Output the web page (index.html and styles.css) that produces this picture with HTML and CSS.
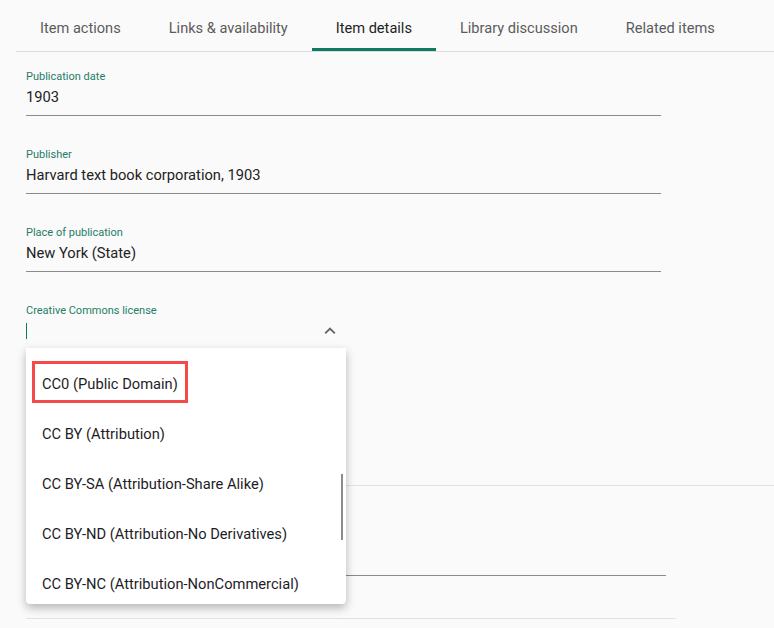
FILE: index.html
```html
<!DOCTYPE html>
<html lang="en">
<head>
  <meta charset="UTF-8" />
  <title>Item details</title>
  <link rel="stylesheet" href="styles.css">
</head>
<body>
  <!-- Tabs -->
  <nav class="tabs">
    <a class="tab">Item actions</a>
    <a class="tab">Links &amp; availability</a>
    <a class="tab active">Item details</a>
    <a class="tab">Library discussion</a>
    <a class="tab">Related items</a>
  </nav>

  <div class="details">
    <div class="field">
      <label>Publication date</label>
      <div class="value">1903</div>
    </div>

    <div class="field">
      <label>Publisher</label>
      <div class="value">Harvard text book corporation, 1903</div>
    </div>

    <div class="field">
      <label>Place of publication</label>
      <div class="value">New York (State)</div>
    </div>

    <!-- License select, open -->
    <div class="field select open">
      <label>Creative Commons license</label>
      <div class="value">
        <span class="caret"></span>
        <svg class="chevron" width="22" height="22" viewBox="0 0 24 24">
          <path d="M7.4 15.4 12 10.8l4.6 4.6L18 14l-6-6-6 6z" fill="#666"/>
        </svg>
      </div>

      <ul class="menu">
        <li><span class="mark"></span>CC0 (Public Domain)</li>
        <li>CC BY (Attribution)</li>
        <li>CC BY-SA (Attribution-Share Alike)</li>
        <li>CC BY-ND (Attribution-No Derivatives)</li>
        <li>CC BY-NC (Attribution-NonCommercial)</li>
      </ul>
      <div class="scrollbar"></div>
    </div>

    <div class="divider"></div>
    <div class="field hidden-field"></div>
    <div class="divider short"></div>
  </div>
</body>
</html>
```

FILE: styles.css
```css
* {
  box-sizing: border-box;
}

body {
  margin: 0;
  background: #fafafa;
  font-family: Roboto, "Noto Sans", sans-serif;
  color: #222;
  overflow: hidden;
}

.tabs {
  display: flex;
  margin-left: 16px;
  border-bottom: 1px solid #dcdcdc;
}

.tab {
  height: 51px;
  padding: 5px 24px 0;
  display: flex;
  align-items: center;
  font-size: 14.6px;
  color: #5c5c5c;
}

.tab.active {
  color: #1e1e1e;
  box-shadow: inset 0 -3px 0 #0f7a62;
}

.details {
  padding: 18px 0 0 26px;
}

.field {
  width: 635px;
  margin-bottom: 32px;
  padding-bottom: 7px;
  border-bottom: 1px solid #8a8a8a;
}

.field label {
  display: block;
  height: 14px;
  line-height: 14px;
  font-size: 11px;
  color: #1f7d66;
}

.field .value {
  margin-top: 2px;
  height: 22px;
  line-height: 22px;
  font-size: 14.7px;
}

.select {
  position: relative;
  width: 320px;
  margin-bottom: 0;
  padding-bottom: 6px;
  border-bottom: 2px solid #0f7a62;
}

.select .value {
  position: relative;
}

.caret {
  position: absolute;
  left: 0;
  top: 3px;
  width: 1px;
  height: 16px;
  background: #0f7a62;
}

.chevron {
  position: absolute;
  right: 5px;
  top: 0;
}

.menu {
  position: absolute;
  left: 0;
  top: 100%;
  margin: 0;
  padding: 11px 0 0;
  width: 320px;
  height: 256px;
  list-style: none;
  overflow: hidden;
  background: #fff;
  border-radius: 0 0 4px 4px;
  box-shadow: 0 4px 10px rgba(0, 0, 0, 0.28);
  z-index: 2;
}

.menu li {
  position: relative;
  height: 50px;
  line-height: 50px;
  padding-left: 16px;
  font-size: 14.7px;
  color: #1d1d26;
}

.mark {
  position: absolute;
  left: 6px;
  top: 2px;
  width: 156px;
  height: 42px;
  border: 3px solid #f34a4a;
}

.scrollbar {
  position: absolute;
  right: 3px;
  top: calc(100% + 126px);
  width: 2px;
  height: 66px;
  background: #8c8c8c;
  z-index: 3;
}

.divider {
  margin-top: 135px;
  height: 1px;
  background: #e2e2e2;
}

.hidden-field {
  width: 640px;
  height: 90px;
  margin-bottom: 42px;
}

.divider.short {
  margin-top: 0;
  width: 650px;
}
```
